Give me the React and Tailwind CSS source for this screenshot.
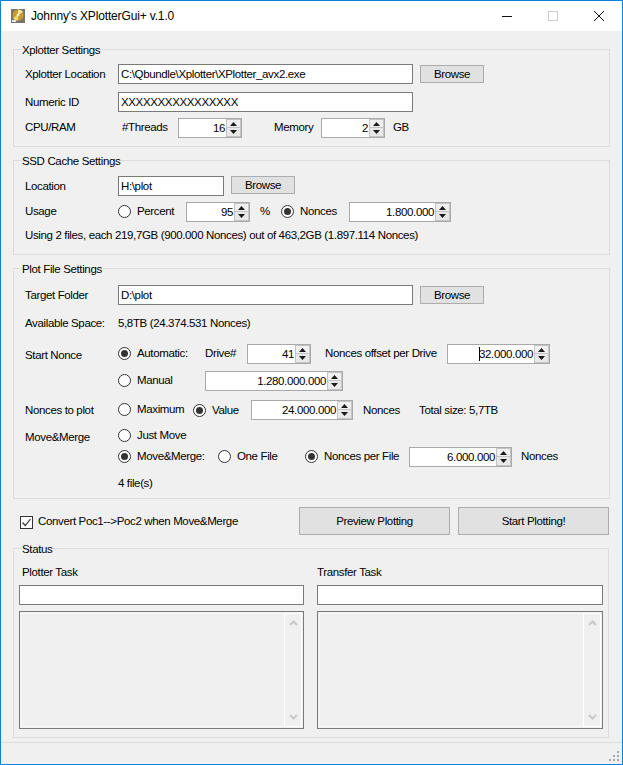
const font = { fontFamily: '"Liberation Sans", Arial, sans-serif' };

function Icon() {
  return (
    <svg width="16" height="16" viewBox="0 0 16 16" className="shrink-0">
      <rect width="14" height="14" x="1" y="1" fill="#77756c" />
      <circle cx="8" cy="7" r="5.5" fill="#c99a2a" />
      <path d="M8 7 L13 4 A5.5 5.5 0 0 0 8 1.5Z" fill="#f6e7a0" />
      <path d="M8 7 L3 10 A5.5 5.5 0 0 0 8 12.5Z" fill="#f2d777" />
      <circle cx="8" cy="7" r="1.4" fill="#efefe0" />
      <rect x="2" y="12" width="4" height="2" fill="#e8e8e0" />
    </svg>
  );
}

function Group({ title, className, children }) {
  return (
    <div className={`relative border border-[#dcdcdc] ${className}`}>
      <span className="absolute left-[8px] top-[-7px] bg-[#f0f0f0] leading-[14px]">{title}</span>
      {children}
    </div>
  );
}

function Row({ className = "", children }) {
  return <div className={`flex h-[20px] items-center ${className}`}>{children}</div>;
}

function Text({ className = "", children }) {
  return <div className={`shrink-0 whitespace-nowrap leading-[14px] ${className}`}>{children}</div>;
}

function Input({ className = "", value = "" }) {
  return (
    <div className={`flex h-[20px] shrink-0 items-center border border-[#7a7a7a] bg-white pl-[2px] leading-[14px] whitespace-nowrap ${className}`}>
      {value}
    </div>
  );
}

function Button({ className = "", children }) {
  return (
    <div className={`flex shrink-0 items-center justify-center border border-[#adadad] bg-[#e1e1e1] leading-[14px] ${className}`}>
      {children}
    </div>
  );
}

function Arrow({ down }) {
  return (
    <svg width="7" height="4" viewBox="0 0 7 4" className="block">
      <path d={down ? "M0 0H7L3.5 4Z" : "M0 4H7L3.5 0Z"} fill="#1a1a1a" />
    </svg>
  );
}

function Spinner({ className = "", value, caret }) {
  return (
    <div className={`flex h-[20px] shrink-0 border border-[#a9a9a9] bg-white ${className}`}>
      <div className="flex min-w-0 flex-1 items-center justify-end pb-[1px] pr-[1px] leading-[14px] whitespace-nowrap">
        {caret && <span className="mr-[-1px] h-[14px] w-[1px] bg-black" />}
        {value}
      </div>
      <div className="flex w-[15px] shrink-0 flex-col">
        <div className="flex h-[9px] items-center justify-center border border-[#c4c4c4] bg-[#f0f0f0]"><Arrow /></div>
        <div className="flex h-[9px] items-center justify-center border border-t-0 border-[#c4c4c4] bg-[#e8e8e8]"><Arrow down /></div>
      </div>
    </div>
  );
}

function Radio({ on, className = "", label, labelClass = "" }) {
  return (
    <div className={`flex shrink-0 items-center ${className}`}>
      <div className="flex h-[13px] w-[13px] shrink-0 items-center justify-center rounded-full border border-[#333333] bg-white">
        {on && <div className="h-[7px] w-[7px] rounded-full bg-[#333333]" />}
      </div>
      <Text className={`ml-[6px] ${labelClass}`}>{label}</Text>
    </div>
  );
}

function LogBox() {
  return (
    <div className="mt-[6px] flex h-[118px] border border-[#7a7a7a] bg-[#f0f0f0] p-[1px]">
      <div className="flex-1 border-y border-l border-[#f8f8f8]" />
      <div className="flex w-[18px] shrink-0 flex-col items-center justify-between border border-white py-[6px]">
        <svg width="9" height="6" viewBox="0 0 9 6"><path d="M1 5L4.5 1.5L8 5" fill="none" stroke="#c8c8c8" strokeWidth="2" /></svg>
        <svg width="9" height="6" viewBox="0 0 9 6"><path d="M1 1L4.5 4.5L8 1" fill="none" stroke="#c8c8c8" strokeWidth="2" /></svg>
      </div>
    </div>
  );
}

function Grip() {
  const dots = [[8, 0], [4, 4], [8, 4], [0, 8], [4, 8], [8, 8]];
  return (
    <svg width="10" height="10" viewBox="0 0 10 10">
      {dots.map(([x, y]) => <rect key={`${x}-${y}`} x={x} y={y} width="2" height="2" fill="#a6a6a6" />)}
    </svg>
  );
}

export default function App() {
  return (
    <div style={font} className="flex h-[765px] w-[623px] flex-col border border-[#0a84d8] bg-[#f0f0f0] text-[11.5px] tracking-[-0.36px] text-black">
      <div className="flex h-[30px] shrink-0 items-center bg-white pl-[9px]">
        <Icon />
        <div className="ml-[5px] text-[12px] tracking-[-0.15px]">Johnny's XPlotterGui+ v.1.0</div>
        <div className="ml-auto flex items-center">
          <svg width="46" height="30" viewBox="0 0 46 30"><path d="M18 15.5H28" stroke="#111" strokeWidth="1" /></svg>
          <svg width="46" height="30" viewBox="0 0 46 30"><rect x="18.5" y="10.5" width="9" height="9" fill="none" stroke="#cccccc" /></svg>
          <svg width="46" height="30" viewBox="0 0 46 30"><path d="M18 10L28 20M28 10L18 20" stroke="#111" strokeWidth="1" /></svg>
        </div>
      </div>

      <div className="flex flex-1 flex-col px-[12px]">
        <Group title="Xplotter Settings" className="mt-[18px] h-[98px] pt-[14px]">
          <Row className="pl-[11px]">
            <Text className="w-[93px]">Xplotter Location</Text>
            <Input className="w-[295px]" value="C:\Qbundle\Xplotter\XPlotter_avx2.exe" />
            <Button className="ml-[7px] h-[18px] w-[64px]">Browse</Button>
          </Row>
          <Row className="mt-[8px] pl-[11px]">
            <Text className="w-[93px]">Numeric ID</Text>
            <Input className="w-[295px]" value="XXXXXXXXXXXXXXXX" />
          </Row>
          <Row className="mt-[6px] pl-[11px]">
            <Text className="mb-[2px] w-[97px]">CPU/RAM</Text>
            <Text className="mb-[2px] w-[56px]">#Threads</Text>
            <Spinner className="w-[64px]" value="16" />
            <Text className="mb-[2px] ml-[32px] w-[47px]">Memory</Text>
            <Spinner className="w-[64px]" value="2" />
            <Text className="mb-[2px] ml-[8px]">GB</Text>
          </Row>
        </Group>

        <Group title="SSD Cache Settings" className="mt-[13px] h-[95px] pt-[15px]">
          <Row className="pl-[11px]">
            <Text className="w-[93px]">Location</Text>
            <Input className="w-[106px]" value="H:\plot" />
            <Button className="mb-[2px] ml-[7px] h-[18px] w-[64px]">Browse</Button>
          </Row>
          <Row className="mt-[6px] pl-[11px]">
            <Text className="mb-[2px] w-[93px]">Usage</Text>
            <Radio className="mb-[2px] w-[68px]" label="Percent" />
            <Spinner className="w-[64px]" value="95" />
            <Text className="mb-[2px] ml-[10px] w-[21px]">%</Text>
            <Radio className="mb-[2px] w-[68px]" on label="Nonces" />
            <Spinner className="w-[102px]" value="1.800.000" />
          </Row>
          <Row className="mt-[3px] pl-[11px]">
            <Text>Using 2 files, each 219,7GB (900.000 Nonces) out of 463,2GB (1.897.114 Nonces)</Text>
          </Row>
        </Group>

        <Group title="Plot File Settings" className="mt-[13px] h-[231px] pt-[16px]">
          <Row className="pl-[11px]">
            <Text className="w-[93px]">Target Folder</Text>
            <Input className="w-[295px]" value="D:\plot" />
            <Button className="ml-[7px] h-[18px] w-[64px]">Browse</Button>
          </Row>
          <Row className="mt-[8px] pl-[11px]">
            <Text className="w-[93px]">Available Space:</Text>
            <Text>5,8TB (24.374.531 Nonces)</Text>
          </Row>
          <Row className="mt-[11px] pl-[11px]">
            <Text className="mt-[2px] w-[93px]">Start Nonce</Text>
            <Radio className="mb-[2px] w-[87px]" on label="Automatic:" />
            <Text className="mb-[2px] w-[42px]">Drive#</Text>
            <Spinner className="w-[64px]" value="41" />
            <Text className="mb-[2px] ml-[14px] w-[122px]">Nonces offset per Drive</Text>
            <Spinner className="w-[103px]" value="32.000.000" caret />
          </Row>
          <Row className="mt-[7px] pl-[104px]">
            <Radio className="mb-[2px] w-[87px]" label="Manual" />
            <Spinner className="w-[138px]" value="1.280.000.000" />
          </Row>
          <Row className="mt-[9px] pl-[11px]">
            <Text className="w-[93px]">Nonces to plot</Text>
            <Radio className="mb-[2px] w-[75px]" label="Maximum" />
            <Radio className="w-[58px]" on label="Value" />
            <Spinner className="w-[102px]" value="24.000.000" />
            <Text className="ml-[10px] w-[56px]">Nonces</Text>
            <Text>Total size: 5,7TB</Text>
          </Row>
          <Row className="mt-[5px] pl-[11px]">
            <Text className="mt-[4px] w-[93px]">Move&amp;Merge</Text>
            <Radio label="Just Move" />
          </Row>
          <Row className="mt-[2px] pl-[104px]">
            <Radio className="mb-[2px] w-[100px]" on label="Move&amp;Merge:" />
            <Radio className="mb-[2px] w-[87px]" label="One File" />
            <Radio className="mb-[2px] w-[104px]" on label="Nonces per File" />
            <Spinner className="w-[103px]" value="6.000.000" />
            <Text className="mb-[2px] ml-[9px]">Nonces</Text>
          </Row>
          <Row className="mt-[6px] pl-[104px]">
            <Text>4 file(s)</Text>
          </Row>
        </Group>

        <div className="mt-[8px] flex h-[28px] shrink-0 items-center pl-[7px]">
          <div className="mt-[2px] flex h-[13px] w-[13px] shrink-0 items-center justify-center border border-[#333333] bg-white">
            <svg width="11" height="11" viewBox="0 0 11 11"><path d="M1.5 5.5L4.3 8.5L9.5 2" fill="none" stroke="#333333" strokeWidth="1.2" /></svg>
          </div>
          <Text className="ml-[5px] w-[261px]">Convert Poc1--&gt;Poc2 when Move&amp;Merge</Text>
          <Button className="h-[28px] w-[151px]">Preview Plotting</Button>
          <Button className="ml-[8px] h-[28px] w-[151px]">Start Plotting!</Button>
        </div>

        <Group title="Status" className="mt-[13px] h-[190px] w-[596px] pt-[16px]">
          <div className="flex pl-[5px]">
            <div className="w-[285px]">
              <Text className="pl-[3px]">Plotter Task</Text>
              <Input className="mt-[6px]" />
              <LogBox />
            </div>
            <div className="ml-[13px] w-[286px]">
              <Text>Transfer Task</Text>
              <Input className="mt-[6px]" />
              <LogBox />
            </div>
          </div>
        </Group>
      </div>

      <div className="mt-[4px] flex h-[22px] shrink-0 items-end justify-end border-t border-[#dcdcdc] pb-[3px] pr-[3px]">
        <Grip />
      </div>
    </div>
  );
}
